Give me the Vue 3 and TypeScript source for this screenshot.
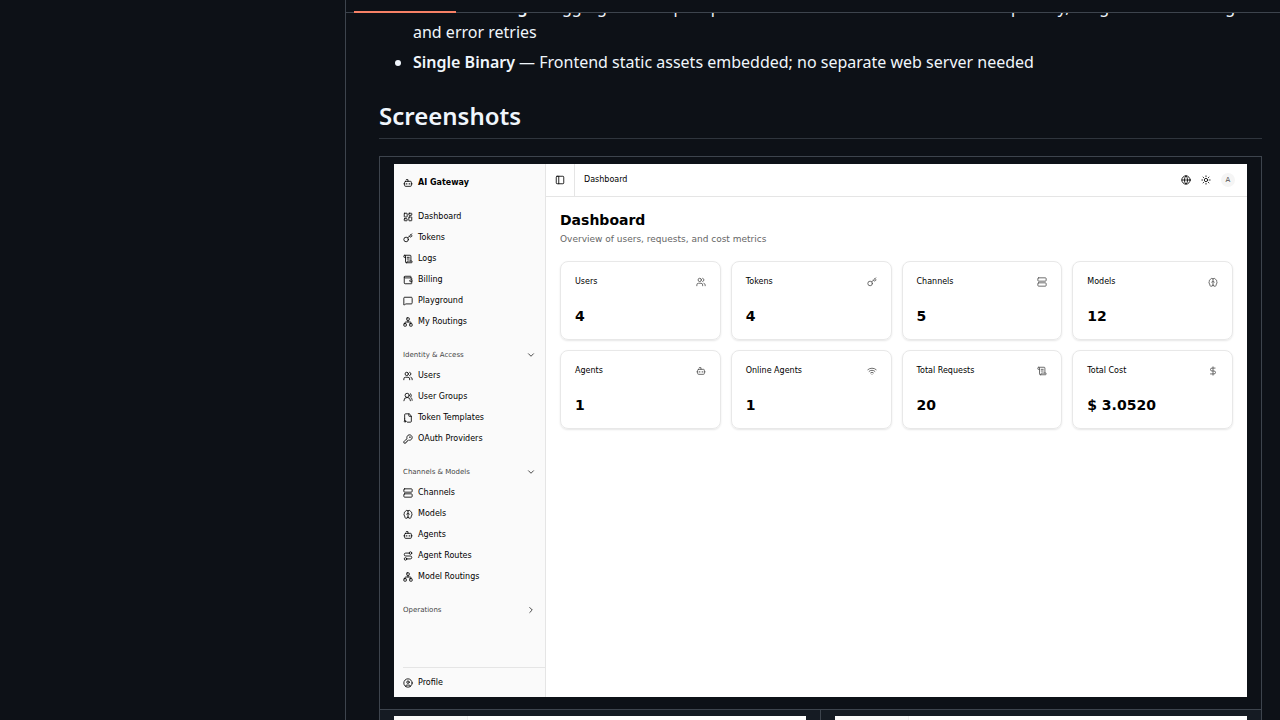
<script setup lang="ts">
import { h, type FunctionalComponent } from 'vue'

type Shape = [string, Record<string, string | number>]
interface NavItem { label: string; icon: string }
interface NavGroup { title: string; open: boolean; items: NavItem[] }
interface Metric { label: string; value: string; icon: string }

const p = (d: string): Shape => ['path', { d }]
const c = (cx: number, cy: number, r: number): Shape => ['circle', { cx, cy, r }]
const r = (x: number, y: number, width: number, height: number, rx: number): Shape => ['rect', { x, y, width, height, rx }]

const shapes: Record<string, Shape[]> = {
  bot: [p('M12 8V4H8M2 14h2M20 14h2M15 13v2M9 13v2'), r(4, 8, 16, 12, 2)],
  dashboard: [r(3, 3, 7, 9, 1), r(14, 3, 7, 5, 1), r(14, 12, 7, 9, 1), r(3, 16, 7, 5, 1)],
  key: [p('m15.5 7.5 2.3 2.3a1 1 0 0 0 1.4 0l2.1-2.1a1 1 0 0 0 0-1.4L19 4M21 2l-9.6 9.6'), c(7.5, 15.5, 5.5)],
  scroll: [p('M15 12h-5M15 8h-5M19 17V5a2 2 0 0 0-2-2H4M8 21h12a2 2 0 0 0 2-2v-1a1 1 0 0 0-1-1H11a1 1 0 0 0-1 1v1a2 2 0 1 1-4 0V5a2 2 0 1 0-4 0v2a1 1 0 0 0 1 1h3')],
  wallet: [p('M19 7V4a1 1 0 0 0-1-1H5a2 2 0 0 0 0 4h15a1 1 0 0 1 1 1v4h-3a2 2 0 0 0 0 4h3a1 1 0 0 0 1-1v-2a1 1 0 0 0-1-1M3 5v14a2 2 0 0 0 2 2h15a1 1 0 0 0 1-1v-4')],
  message: [p('M22 17a2 2 0 0 1-2 2H6.8a2 2 0 0 0-1.4.6l-2.2 2.2A.7.7 0 0 1 2 21.3V5a2 2 0 0 1 2-2h16a2 2 0 0 1 2 2z')],
  network: [r(16, 16, 6, 6, 1), r(2, 16, 6, 6, 1), r(9, 2, 6, 6, 1), p('M5 16v-3a1 1 0 0 1 1-1h12a1 1 0 0 1 1 1v3M12 12V8')],
  users: [p('M16 21v-2a4 4 0 0 0-4-4H6a4 4 0 0 0-4 4v2M16 3.128a4 4 0 0 1 0 7.744M22 21v-2a4 4 0 0 0-3-3.87'), c(9, 7, 4)],
  usersRound: [p('M18 21a8 8 0 0 0-16 0M22 20c0-3.37-2-6.5-4-8a5 5 0 0 0-.45-8.3'), c(10, 8, 5)],
  fileKey: [p('M10.65 22H18a2 2 0 0 0 2-2V8a2.4 2.4 0 0 0-.706-1.706l-3.588-3.588A2.4 2.4 0 0 0 14 2H6a2 2 0 0 0-2 2v10.1M14 2v5a1 1 0 0 0 1 1h5M4 14v4'), c(5, 20, 2)],
  keyRound: [p('M2.586 17.414A2 2 0 0 0 2 18.828V21a1 1 0 0 0 1 1h3a1 1 0 0 0 1-1v-1a1 1 0 0 1 1-1h1a1 1 0 0 0 1-1v-1a1 1 0 0 1 1-1h.172a2 2 0 0 0 1.414-.586l.814-.814a6.5 6.5 0 1 0-4-4z'), c(16.5, 7.5, 0.5)],
  server: [r(2, 2, 20, 8, 2), r(2, 14, 20, 8, 2)],
  brain: [p('M12 4v16M9 12.5c1.6-.5 2.6-1.400 3-2.500.4 1.100 1.400 2 3 2.500M12 4.500a3.500 3.500 0 0 0-6 1.300A4.500 4.500 0 0 0 3 11a4.500 4.500 0 0 0 1.200 6A4 4 0 0 0 12 19.500M12 4.500a3.500 3.500 0 0 1 6 1.300A4.500 4.500 0 0 1 21 11a4.500 4.500 0 0 1-1.200 6A4 4 0 0 1 12 19.500')],
  route: [c(6, 19, 3), c(18, 5, 3), p('M9 19h8.5a3.5 3.5 0 0 0 0-7h-11a3.5 3.5 0 0 1 0-7H15')],
  profile: [c(12, 12, 10), c(12, 10, 3), p('M7 20.662V19a2 2 0 0 1 2-2h6a2 2 0 0 1 2 2v1.662')],
  panel: [r(3, 3, 18, 18, 2), p('M9 3v18')],
  globe: [c(12, 12, 10), p('M12 2a14.5 14.5 0 0 0 0 20 14.5 14.5 0 0 0 0-20M2 12h20')],
  sun: [c(12, 12, 4), p('M12 2v2M12 20v2M4.93 4.93l1.41 1.41M17.66 17.66l1.41 1.41M2 12h2M20 12h2M6.34 17.66l-1.41 1.41M19.07 4.93l-1.41 1.41')],
  wifi: [p('M12 20h.01M2 8.82a15 15 0 0 1 20 0M5 12.859a10 10 0 0 1 14 0M8.5 16.429a5 5 0 0 1 7 0')],
  dollar: [p('M12 2v20M17 5H9.5a3.5 3.5 0 0 0 0 7h5a3.5 3.5 0 0 1 0 7H6')],
  down: [p('m6 9 6 6 6-6')],
  right: [p('m9 18 6-6-6-6')],
}

const Icon: FunctionalComponent<{ name: string }> = (props) =>
  h('svg', {
    viewBox: '0 0 24 24', fill: 'none', stroke: 'currentColor',
    'stroke-linecap': 'round', 'stroke-linejoin': 'round', 'aria-hidden': 'true',
  }, shapes[props.name].map(([tag, attrs]) => h(tag, attrs)))
Icon.props = ['name']

const mainNav: NavItem[] = [
  { label: 'Dashboard', icon: 'dashboard' },
  { label: 'Tokens', icon: 'key' },
  { label: 'Logs', icon: 'scroll' },
  { label: 'Billing', icon: 'wallet' },
  { label: 'Playground', icon: 'message' },
  { label: 'My Routings', icon: 'network' },
]

const groups: NavGroup[] = [
  {
    title: 'Identity & Access', open: true, items: [
      { label: 'Users', icon: 'users' },
      { label: 'User Groups', icon: 'usersRound' },
      { label: 'Token Templates', icon: 'fileKey' },
      { label: 'OAuth Providers', icon: 'keyRound' },
    ],
  },
  {
    title: 'Channels & Models', open: true, items: [
      { label: 'Channels', icon: 'server' },
      { label: 'Models', icon: 'brain' },
      { label: 'Agents', icon: 'bot' },
      { label: 'Agent Routes', icon: 'route' },
      { label: 'Model Routings', icon: 'network' },
    ],
  },
  { title: 'Operations', open: false, items: [] },
]

const metrics: Metric[] = [
  { label: 'Users', value: '4', icon: 'users' },
  { label: 'Tokens', value: '4', icon: 'key' },
  { label: 'Channels', value: '5', icon: 'server' },
  { label: 'Models', value: '12', icon: 'brain' },
  { label: 'Agents', value: '1', icon: 'bot' },
  { label: 'Online Agents', value: '1', icon: 'wifi' },
  { label: 'Total Requests', value: '20', icon: 'scroll' },
  { label: 'Total Cost', value: '$ 3.0520', icon: 'dollar' },
]
</script>

<template>
  <div class="page">
    <div class="gutter"></div>
    <main class="readme">
      <nav class="tabs"><a class="tab" href="#readme" aria-label="README"></a></nav>
      <article class="body">
        <ul class="features">
          <li><strong>Model Routing</strong> — Aggregate multiple upstream channels with routes based on priority, weight-based routing and error retries</li>
          <li><strong>Single Binary</strong> — Frontend static assets embedded; no separate web server needed</li>
        </ul>
        <h2>Screenshots</h2>
        <table class="gallery">
          <tbody>
            <tr>
              <td colspan="2">
                <section class="app">
                  <aside class="side">
                    <div class="brand"><Icon name="bot" /><span>AI Gateway</span></div>
                    <nav class="links">
                      <a v-for="item in mainNav" :key="item.label" href="#" class="link"><Icon :name="item.icon" /><span>{{ item.label }}</span></a>
                    </nav>
                    <div v-for="group in groups" :key="group.title" class="group">
                      <button type="button" class="group-title" :aria-expanded="group.open">
                        <span>{{ group.title }}</span><Icon :name="group.open ? 'down' : 'right'" />
                      </button>
                      <nav v-if="group.open" class="links">
                        <a v-for="item in group.items" :key="item.label" href="#" class="link"><Icon :name="item.icon" /><span>{{ item.label }}</span></a>
                      </nav>
                    </div>
                    <div class="account"><a href="#" class="link"><Icon name="profile" /><span>Profile</span></a></div>
                  </aside>
                  <div class="content">
                    <header class="top">
                      <button type="button" class="toggle" aria-label="Toggle sidebar"><Icon name="panel" /></button>
                      <span class="crumb">Dashboard</span>
                      <div class="actions">
                        <button type="button" aria-label="Language"><Icon name="globe" /></button>
                        <button type="button" aria-label="Theme"><Icon name="sun" /></button>
                        <button type="button" class="avatar">A</button>
                      </div>
                    </header>
                    <div class="panel">
                      <h1>Dashboard</h1>
                      <p class="lead">Overview of users, requests, and cost metrics</p>
                      <div class="cards">
                        <div v-for="m in metrics" :key="m.label" class="card">
                          <div class="card-head"><span>{{ m.label }}</span><Icon :name="m.icon" /></div>
                          <div class="value">{{ m.value }}</div>
                        </div>
                      </div>
                    </div>
                  </div>
                </section>
              </td>
            </tr>
            <tr class="alt">
              <td v-for="n in 2" :key="n"><div class="thumb"><div class="thumb-side"></div></div></td>
            </tr>
          </tbody>
        </table>
      </article>
    </main>
  </div>
</template>

<style>
html, body { background: #0d1117; }
</style>

<style scoped>
.page {
  display: flex;
  height: 100vh;
  overflow: hidden;
  background: #0d1117;
  color: #f0f6fc;
  font: 16px/25px "Noto Sans", sans-serif;
}
.page *, .page { box-sizing: border-box; }
.gutter { flex: 0 0 345px; }
.readme {
  flex: 1;
  min-width: 0;
  display: flex;
  flex-direction: column;
  border-left: 1px solid #3d444d;
}
.tabs {
  flex: none;
  display: flex;
  align-items: flex-end;
  height: 13px;
  padding-left: 8px;
  border-bottom: 1px solid #3d444d;
}
.tab {
  width: 102px;
  height: 12px;
  margin-bottom: -1px;
  border-bottom: 2px solid #f78166;
}
.body { flex: 1; min-height: 0; overflow: hidden; padding: 0 18px 0 33px; }
.features { margin: -18px 0 0; padding-left: 34px; }
.features li + li { margin-top: 5px; }
strong, h2 { font-weight: 600; }
h2 {
  margin: 24px 0 17px;
  padding-bottom: 6px;
  border-bottom: 1px solid #2f353d;
  font-size: 24px;
  line-height: 33px;
}
.gallery { width: 100%; border-collapse: collapse; table-layout: fixed; }
.gallery td { padding: 7px 14px 12px; border: 1px solid #3d444d; vertical-align: top; }
.gallery .alt td { padding-top: 6px; }
.alt { background: #151b23; }
.thumb { display: flex; height: 260px; background: #fff; }
.thumb-side { width: 18%; background: #fafafa; border-right: 1px solid #eee; }

.app {
  display: flex;
  min-height: 533px;
  background: #fff;
  color: #000;
  font: 8px/12px "DejaVu Sans", sans-serif;
}
svg { flex: none; width: 10px; height: 10px; stroke-width: 2; }
button { display: flex; align-items: center; padding: 0; border: 0; background: none; color: inherit; font: inherit; }
.side {
  flex: 0 0 152px;
  display: flex;
  flex-direction: column;
  padding: 8px 0 4px 9px;
  border-right: 1px solid #e5e5e5;
  background: #fafafa;
}
.brand { display: flex; align-items: center; gap: 5px; height: 22px; margin-bottom: 11px; font-weight: 700; }
.links { display: grid; padding: 1px 0; }
.link { display: flex; align-items: center; gap: 5px; height: 21px; color: inherit; text-decoration: none; }
.group { margin-top: 13px; }
.group-title { width: 100%; height: 18px; justify-content: space-between; padding-right: 9px; color: #454545; font-size: 7px; }
.group-title svg { color: #262626; }
.account { margin-top: auto; padding-top: 4px; border-top: 1px solid #e5e5e5; }

.content { flex: 1; min-width: 0; }
.top { display: flex; align-items: center; height: 33px; padding-right: 12px; border-bottom: 1px solid #e5e5e5; }
.toggle { align-self: stretch; width: 29px; justify-content: center; border-right: 1px solid #e5e5e5; }
.crumb { margin-left: 9px; }
.actions { display: flex; align-items: center; gap: 10px; margin-left: auto; }
.avatar { justify-content: center; width: 14px; height: 14px; border-radius: 50%; background: #f5f5f5; color: #525252; font-size: 7px; }
.panel { padding: 13px 14px; }
h1 { margin: 0; font-size: 14px; line-height: 20px; font-weight: 700; }
.lead { margin: 2px 0 15px; color: #666; font-size: 9px; line-height: 14px; }
.cards { display: grid; grid-template-columns: repeat(4, 1fr); gap: 10px; }
.card { padding: 13px 14px; border: 1px solid #e8e8e8; border-radius: 8px; box-shadow: 0 1px 2px rgba(0, 0, 0, 0.1); }
.card-head { display: flex; align-items: center; justify-content: space-between; height: 13px; }
.card-head svg { color: #525252; }
.value { margin-top: 18px; font-size: 14px; line-height: 20px; font-weight: 700; }
</style>
